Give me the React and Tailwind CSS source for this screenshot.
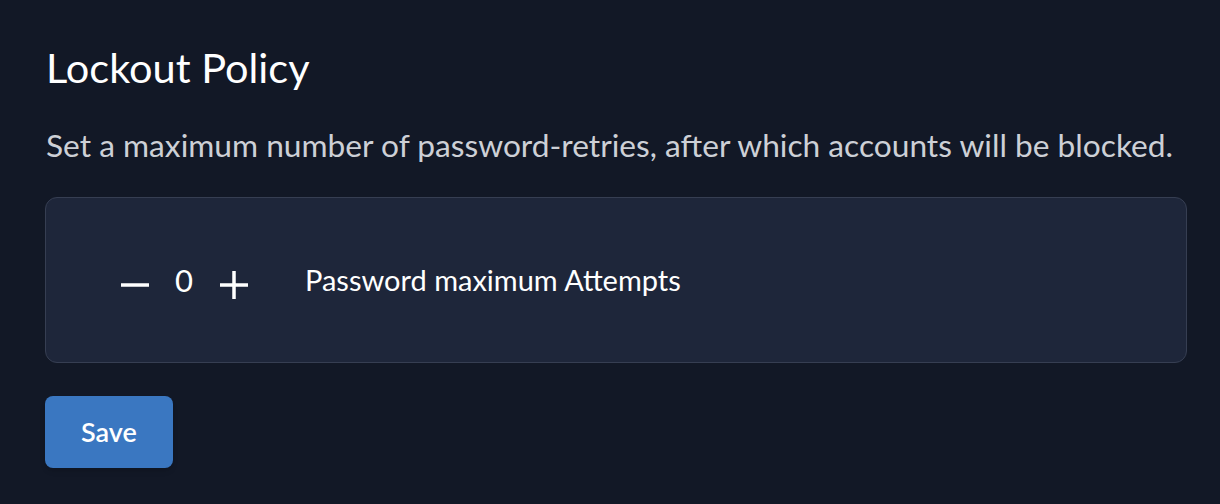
import React, { useState } from "react";

export default function App() {
  const [attempts, setAttempts] = useState(0);

  return (
    <div
      className="min-h-[504px] bg-[#121826] px-[45px] pt-[42px] text-white"
      style={{ fontFamily: "Lato, 'Noto Sans', sans-serif" }}
    >
      <h2 className="pl-px text-[41.5px] leading-[50px] font-normal">Lockout Policy</h2>
      <p className="mt-[34px] pl-px text-[31.7px] leading-[38px] text-[#cdd0d6]">
        Set a maximum number of password-retries, after which accounts will be blocked.
      </p>

      <div className="mt-[33px] flex h-[166px] w-[1142px] items-center rounded-[12px] border border-[#363e52] bg-[#1e263a] pl-[75px]">
        <div className="flex items-center">
          <button
            className="mt-[10px] flex h-[28px] w-[28px] items-center justify-center"
            onClick={() => setAttempts((n) => Math.max(0, n - 1))}
          >
            <svg width="28" height="28" viewBox="0 0 28 28">
              <path d="M0 14h28" stroke="white" strokeWidth="3.5" />
            </svg>
          </button>
          <span className="ml-[26px] mr-[27px] text-[31px] leading-[36px]">{attempts}</span>
          <button
            className="mt-[10px] flex h-[28px] w-[28px] items-center justify-center"
            onClick={() => setAttempts((n) => n + 1)}
          >
            <svg width="28" height="28" viewBox="0 0 28 28">
              <path d="M0 14h28M14 0v28" stroke="white" strokeWidth="3.5" />
            </svg>
          </button>
        </div>
        <span className="ml-[57px] text-[29px] leading-[36px]">Password maximum Attempts</span>
      </div>

      <button className="mt-[33px] h-[72px] w-[128px] rounded-[8px] bg-[#3a77c1] text-[27px] font-semibold shadow-md">
        Save
      </button>
    </div>
  );
}
